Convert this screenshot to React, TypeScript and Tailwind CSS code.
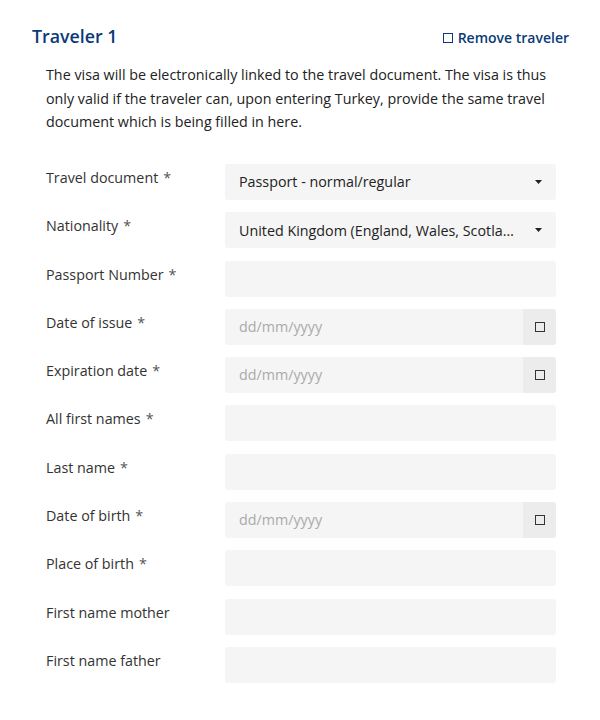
import React from "react";

const fields: { label: string; req: boolean; type: "select" | "text" | "date"; value?: string }[] = [
  { label: "Travel document", req: true, type: "select", value: "Passport - normal/regular" },
  { label: "Nationality", req: true, type: "select", value: "United Kingdom (England, Wales, Scotland and Northern Ireland)" },
  { label: "Passport Number", req: true, type: "text" },
  { label: "Date of issue", req: true, type: "date" },
  { label: "Expiration date", req: true, type: "date" },
  { label: "All first names", req: true, type: "text" },
  { label: "Last name", req: true, type: "text" },
  { label: "Date of birth", req: true, type: "date" },
  { label: "Place of birth", req: true, type: "text" },
  { label: "First name mother", req: false, type: "text" },
  { label: "First name father", req: false, type: "text" },
];

function Box({ className = "" }: { className?: string }) {
  return <span className={`inline-block w-[10px] h-[10px] border-[1.5px] ${className}`} />;
}

function Caret() {
  return (
    <svg width="7" height="4" viewBox="0 0 7 4" className="shrink-0">
      <path d="M0 0h7L3.5 4z" fill="#222" />
    </svg>
  );
}

export default function App() {
  return (
    <div className="w-[600px] h-[720px] bg-white text-[#222] pl-[32px] pr-[31px] pt-[24px]" style={{ fontFamily: '"Open Sans", sans-serif' }}>
      <div className="flex justify-between items-center h-[24px]">
        <h2 className="text-[17.8px] font-semibold text-[#0b3a78] leading-[24px]">Traveler 1</h2>
        <button className="flex items-center gap-[5px] text-[14px] font-semibold text-[#0b3a78] leading-[20px] mt-[4px]">
          <Box className="border-[#0b3a78]" />
          Remove traveler
        </button>
      </div>
      <p className="text-[14.3px] leading-[23.5px] pl-[14px] pr-[8px] mt-[15px]">
        The visa will be electronically linked to the travel document. The visa is thus only valid if the traveler can, upon entering Turkey, provide the same travel document which is being filled in here.
      </p>
      <div className="flex flex-col gap-[12.3px] mt-[30.5px] pl-[14px] pr-[13px]">
        {fields.map((f) => (
          <div key={f.label} className="flex h-[36px]">
            <div className="w-[179px] text-[14.3px] leading-[20px] pt-[4px] text-[#333]">
              {f.label}
              {f.req && <span className="ml-[5px] text-[#555]">*</span>}
            </div>
            <div className="flex-1 min-w-0 flex bg-[#f5f5f5] rounded-[3px] overflow-hidden">
              {f.type === "select" && (
                <div className="flex-1 min-w-0 flex items-center pl-[14px] pr-[14px] gap-[18px]">
                  <span className="flex-1 min-w-0 truncate text-[14.3px]">{f.value}</span>
                  <Caret />
                </div>
              )}
              {f.type === "text" && <div className="flex-1" />}
              {f.type === "date" && (
                <>
                  <div className="flex-1 flex items-center pl-[14px] text-[14.3px] text-[#aaa]">dd/mm/yyyy</div>
                  <div className="w-[33px] bg-[#ececec] flex items-center justify-center">
                    <Box className="border-[#333]" />
                  </div>
                </>
              )}
            </div>
          </div>
        ))}
      </div>
    </div>
  );
}
